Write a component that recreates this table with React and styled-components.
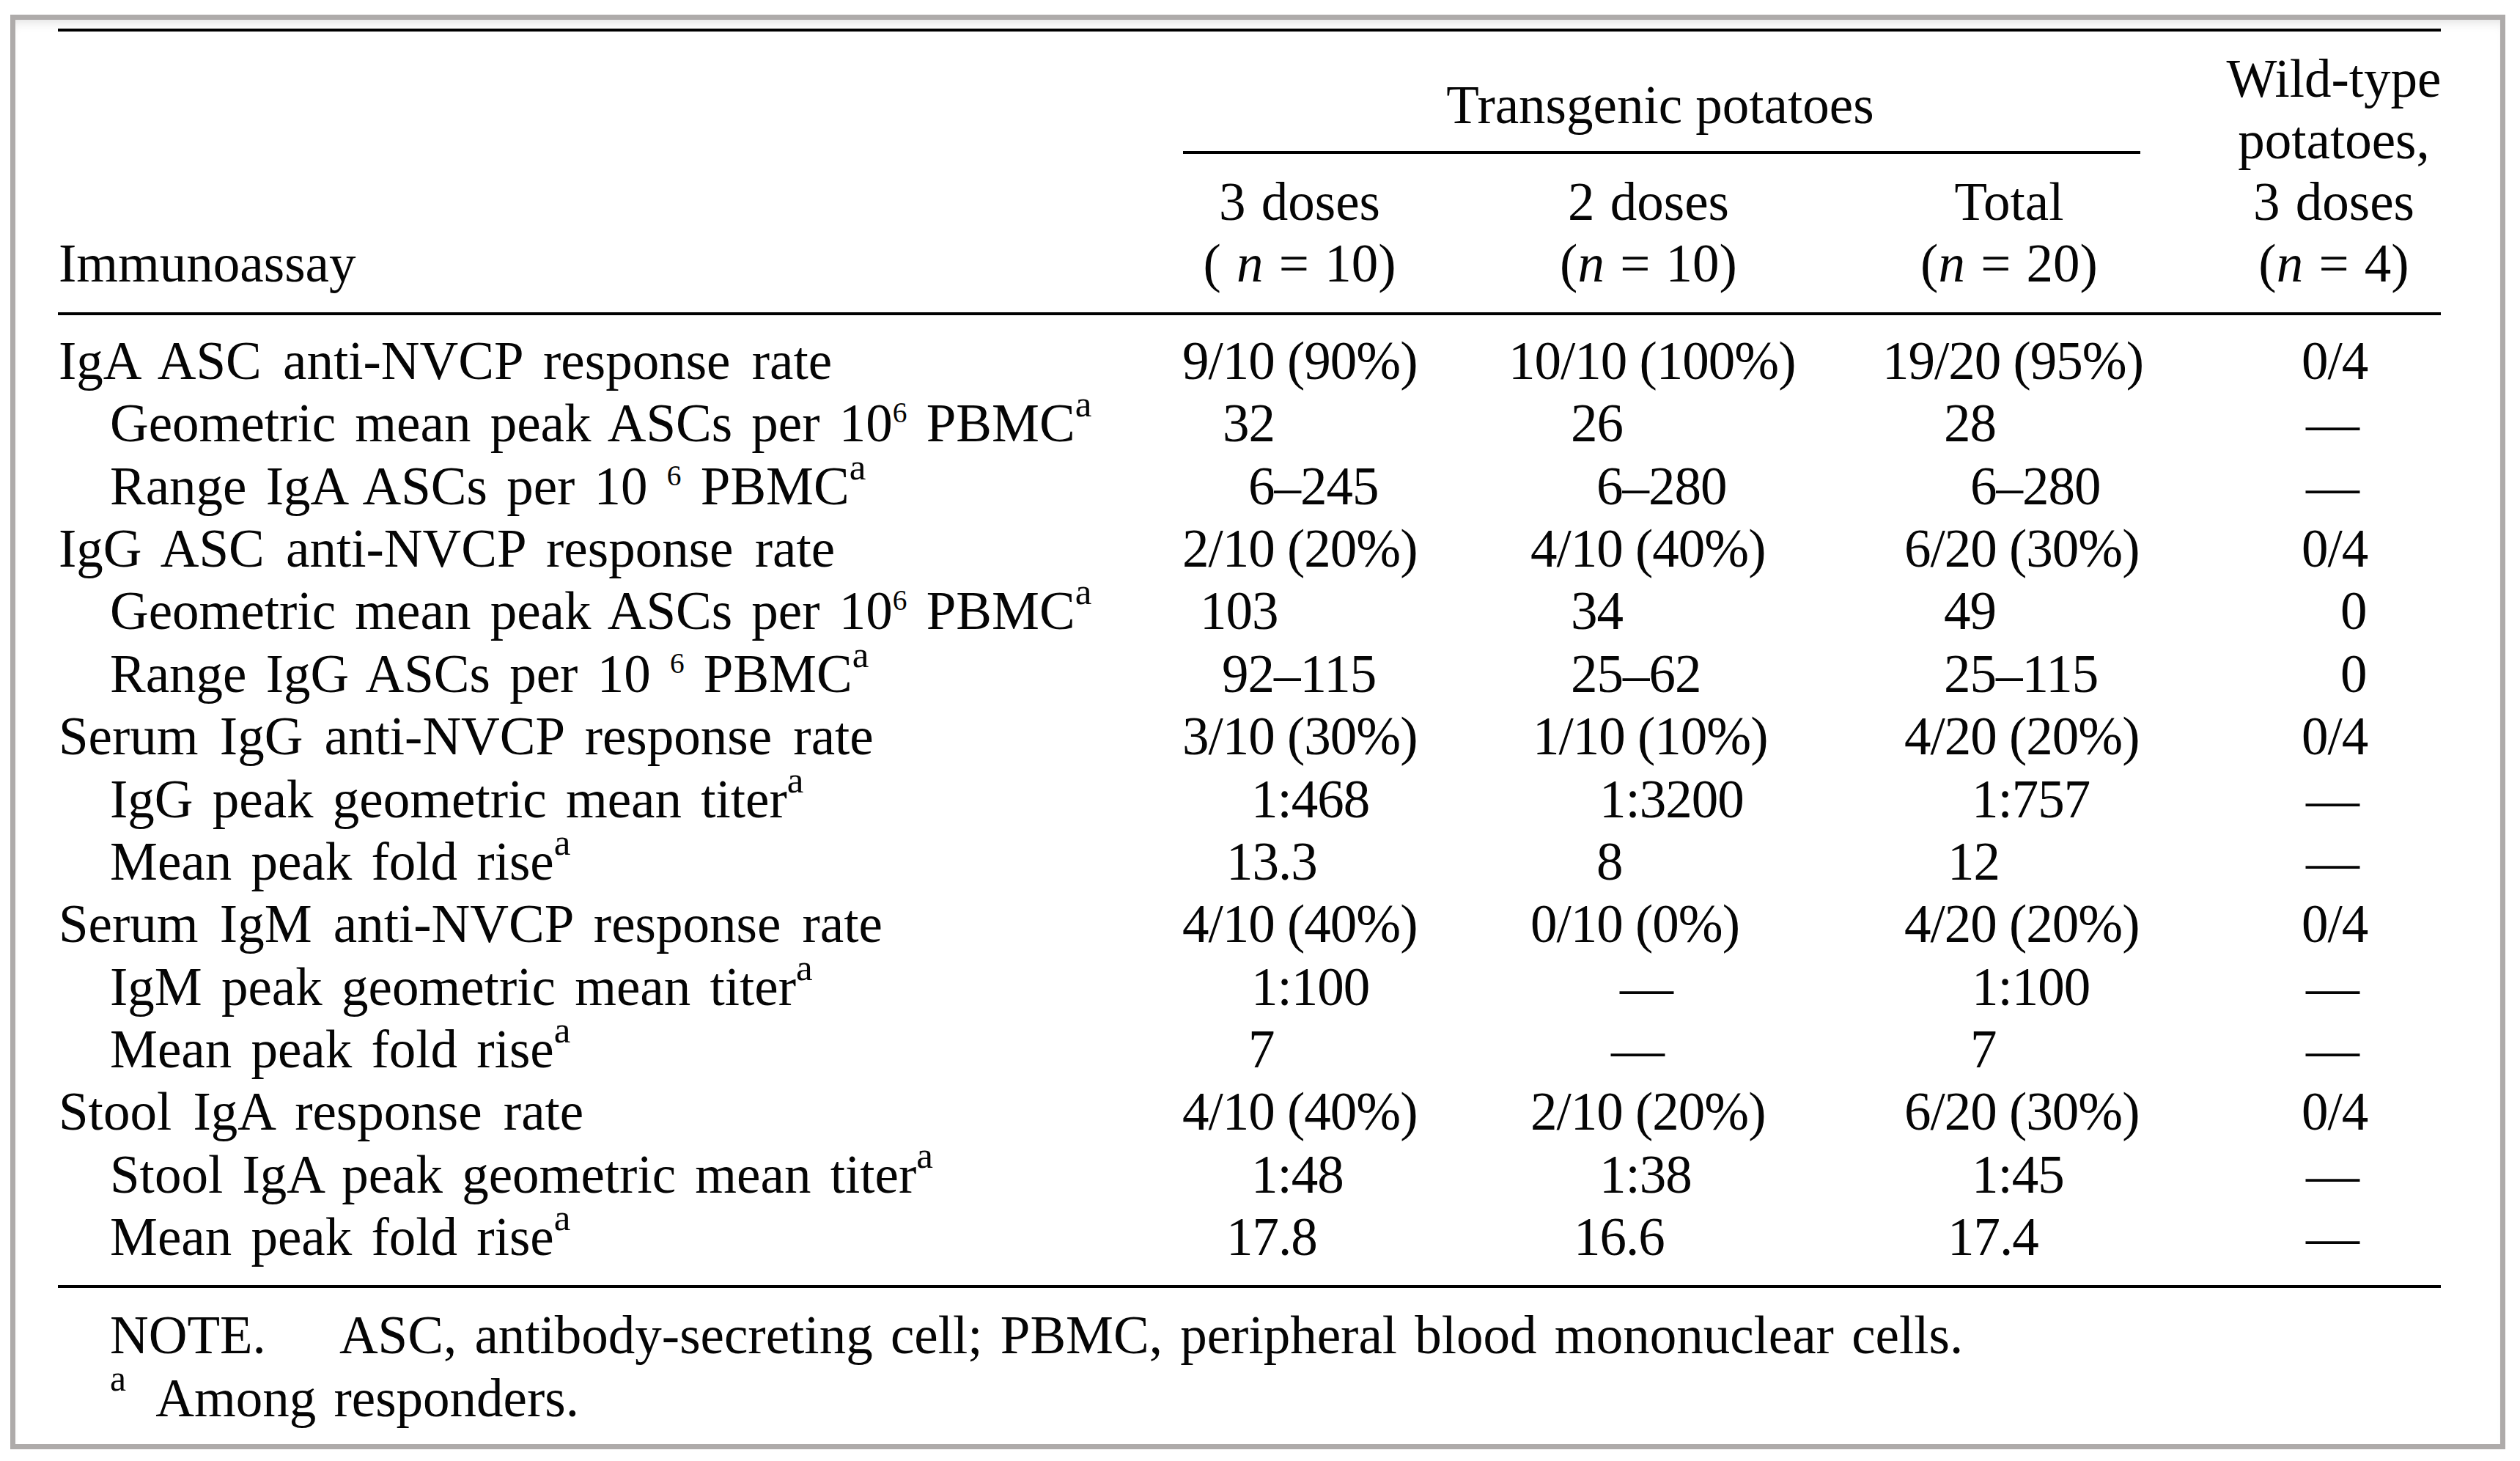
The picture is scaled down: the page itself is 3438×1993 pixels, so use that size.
import React from 'react';
import styled, {createGlobalStyle} from 'styled-components';

const COLS = '1456px 476px 476px 508px 335px';

const GlobalStyle = createGlobalStyle`
  html, body {
    margin: 0;
    background: #fff;
  }
  body {
    font-family: "Liberation Serif", "Times New Roman", serif;
    color: #050505;
  }
`

const Frame = styled.div`
  box-sizing: border-box;
  margin: 20px 0 0 14px;
  width: 3404px;
  height: 1957px;
  border: 7px solid #aeabaa;
  box-shadow: inset 0 12px 16px -10px rgba(0, 0, 0, 0.14);
  padding: 12px 81px 0 58px;
  font-size: 73px;
`

const Rule = styled.div`
  height: ${p => p.$thick || 4}px;
  background: #000;
`

const HeaderGrid = styled.div`
  display: grid;
  grid-template-columns: ${COLS};
  grid-template-rows: 168px 168px;
  padding: 23px 0 24px;
  line-height: 84px;
`

const StubHead = styled.div`
  grid-column: 1;
  grid-row: 2;
  align-self: end;
  padding-left: 1px;
`

const Spanner = styled.div`
  grid-column: 2 / 5;
  grid-row: 1;
  display: flex;
  flex-direction: column;
  padding-top: 36px;
`

const SpannerTitle = styled.div`
  text-align: center;
`

const SpannerRule = styled(Rule)`
  margin: 20px 75px 0 79px;
`

const ColHead = styled.div`
  grid-row: ${p => p.$rows || 2};
  grid-column: ${p => p.$col};
  display: flex;
  flex-direction: column;
  justify-content: flex-end;
  align-items: center;
  padding-left: ${p => p.$pl || 0}px;
  white-space: nowrap;
  word-spacing: 3px;
`

const Body = styled.div`
  padding: 20px 0 23px;
`

const Row = styled.div`
  display: grid;
  grid-template-columns: ${COLS};
  height: 85.36px;
  line-height: 85.36px;
  white-space: nowrap;
`

const Label = styled.div`
  padding-left: ${p => (p.$level ? 71 : 1)}px;
  word-spacing: ${p => (p.$level ? 8 : 11)}px;
`

const Value = styled.div`
  padding-left: ${p => p.$pl}px;
  letter-spacing: -1px;
`

const Sup = styled.span`
  font-size: ${p => p.$size}em;
  vertical-align: ${p => p.$rise}px;
  line-height: 0;
  word-spacing: 0;
`

const Notes = styled.div`
  padding: 22px 0 0 71px;
  line-height: 86px;
  white-space: nowrap;
`

const NoteLine = styled.div`
  word-spacing: 6px;
`

const NoteTag = styled.span`
  display: inline-block;
  margin-right: 100px;
`

const FootMark = styled(Sup)`
  margin-right: 20px;
`

const PerMillion = ({spaced}) => (
  <>
    10{spaced ? ' ' : ''}<Sup $size={0.54} $rise={26}>6</Sup> PBMC<Sup $size={0.7} $rise={34}>a</Sup>
  </>
)

const Mark = () => <Sup $size={0.7} $rise={34}>a</Sup>

const rows = [
  {label: 'IgA ASC anti-NVCP response rate', level: 0,
    cells: [[78, '9/10 (90%)'], [47, '10/10 (100%)'], [81, '19/20 (95%)'], [145, '0/4']]},
  {label: <>Geometric mean peak ASCs per <PerMillion /></>, level: 1,
    cells: [[133, '32'], [132, '26'], [165, '28'], [151, '—']]},
  {label: <>Range IgA ASCs per <PerMillion spaced /></>, level: 1,
    cells: [[168, '6–245'], [167, '6–280'], [201, '6–280'], [151, '—']]},
  {label: 'IgG ASC anti-NVCP response rate', level: 0,
    cells: [[78, '2/10 (20%)'], [77, '4/10 (40%)'], [111, '6/20 (30%)'], [145, '0/4']]},
  {label: <>Geometric mean peak ASCs per <PerMillion /></>, level: 1,
    cells: [[102, '103'], [132, '34'], [165, '49'], [198, '0']]},
  {label: <>Range IgG ASCs per <PerMillion spaced /></>, level: 1,
    cells: [[132, '92–115'], [132, '25–62'], [165, '25–115'], [198, '0']]},
  {label: 'Serum IgG anti-NVCP response rate', level: 0,
    cells: [[78, '3/10 (30%)'], [80, '1/10 (10%)'], [111, '4/20 (20%)'], [145, '0/4']]},
  {label: <>IgG peak geometric mean titer<Mark /></>, level: 1,
    cells: [[172, '1:468'], [171, '1:3200'], [203, '1:757'], [151, '—']]},
  {label: <>Mean peak fold rise<Mark /></>, level: 1,
    cells: [[138, '13.3'], [167, '8'], [170, '12'], [151, '—']]},
  {label: 'Serum IgM anti-NVCP response rate', level: 0,
    cells: [[78, '4/10 (40%)'], [77, '0/10 (0%)'], [111, '4/20 (20%)'], [145, '0/4']]},
  {label: <>IgM peak geometric mean titer<Mark /></>, level: 1,
    cells: [[172, '1:100'], [199, '—'], [203, '1:100'], [151, '—']]},
  {label: <>Mean peak fold rise<Mark /></>, level: 1,
    cells: [[168, '7'], [187, '—'], [201, '7'], [151, '—']]},
  {label: 'Stool IgA response rate', level: 0,
    cells: [[78, '4/10 (40%)'], [77, '2/10 (20%)'], [111, '6/20 (30%)'], [145, '0/4']]},
  {label: <>Stool IgA peak geometric mean titer<Mark /></>, level: 1,
    cells: [[172, '1:48'], [171, '1:38'], [203, '1:45'], [151, '—']]},
  {label: <>Mean peak fold rise<Mark /></>, level: 1,
    cells: [[138, '17.8'], [136, '16.6'], [170, '17.4'], [151, '—']]},
]

const N = () => <i>n</i>

const App = () => {
  return (
    <>
      <GlobalStyle />
      <Frame>
        <Rule $thick={4} />
        <HeaderGrid>
          <StubHead>Immunoassay</StubHead>
          <Spanner>
            <SpannerTitle>Transgenic potatoes</SpannerTitle>
            <SpannerRule />
          </Spanner>
          <ColHead $col={2}>
            <span>3 doses</span>
            <span>( <N /> = 10)</span>
          </ColHead>
          <ColHead $col={3}>
            <span>2 doses</span>
            <span>(<N /> = 10)</span>
          </ColHead>
          <ColHead $col={4}>
            <span>Total</span>
            <span>(<N /> = 20)</span>
          </ColHead>
          <ColHead $col={5} $rows="1 / 3" $pl={43}>
            <span>Wild-type</span>
            <span>potatoes,</span>
            <span>3 doses</span>
            <span>(<N /> = 4)</span>
          </ColHead>
        </HeaderGrid>
        <Rule $thick={4} />
        <Body>
          {rows.map((r, i) => (
            <Row key={i}>
              <Label $level={r.level}>{r.label}</Label>
              {r.cells.map(([pl, v], j) => (
                <Value key={j} $pl={pl}>{v}</Value>
              ))}
            </Row>
          ))}
        </Body>
        <Rule $thick={4} />
        <Notes>
          <NoteLine>
            <NoteTag>NOTE.</NoteTag>ASC, antibody-secreting cell; PBMC, peripheral blood mononuclear cells.
          </NoteLine>
          <NoteLine>
            <FootMark $size={0.68} $rise={35}>a</FootMark> Among responders.
          </NoteLine>
        </Notes>
      </Frame>
    </>
  );
};

export default App;
